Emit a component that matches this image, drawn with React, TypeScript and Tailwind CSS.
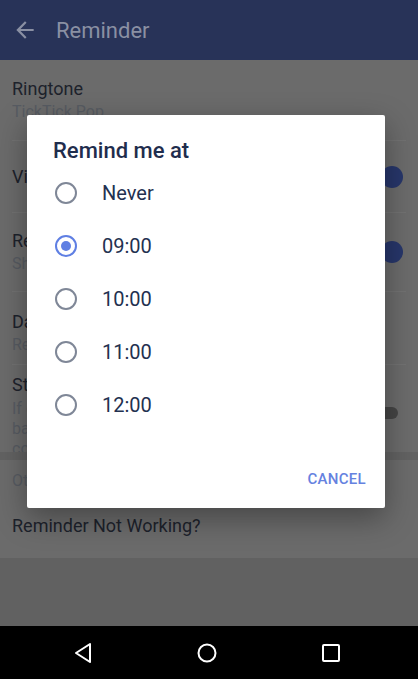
const times = ["Never", "09:00", "10:00", "11:00", "12:00", "13:00"];

const Radio = ({ checked }: { checked: boolean }) => (
  <span
    className={`flex h-[22px] w-[22px] items-center justify-center rounded-full border-2 ${
      checked ? "border-[#5f7fe3]" : "border-[#7f8797]"
    }`}
  >
    {checked && <span className="h-[10px] w-[10px] rounded-full bg-[#5f7fe3]" />}
  </span>
);

const Knob = () => (
  <div className="absolute right-[15px] top-1/2 h-[22px] w-[22px] -translate-y-1/2 rounded-full bg-[#27366a]" />
);

export default function App() {
  return (
    <div
      className="relative flex h-[679px] w-[418px] flex-col overflow-hidden bg-[#616161]"
      style={{ fontFamily: "Roboto, 'Liberation Sans', sans-serif" }}
    >
      {/* app bar, dimmed */}
      <header className="flex h-[60px] items-center bg-[#283358] pl-[12px]">
        <svg width="26" height="26" viewBox="0 0 24 24" className="text-[#8a90a3]">
          <path d="M20 11H7.83l5.59-5.59L12 4l-8 8 8 8 1.41-1.41L7.83 13H20v-2z" fill="currentColor" />
        </svg>
        <span className="ml-[18px] text-[22px] text-[#8a90a3]">Reminder</span>
      </header>

      {/* settings list, dimmed */}
      <div className="flex flex-col bg-[#6b6b6b]">
        <div className="flex h-[80px] flex-col px-[12px] pt-[18px]">
          <span className="text-[18px] leading-[22px] text-[#1d222b]">Ringtone</span>
          <span className="mt-[1px] text-[16px] leading-[22px] text-[#575b62]">TickTick Pop</span>
        </div>
        <div className="mx-[12px] h-px bg-[#727272]" />
        <div className="relative flex h-[71px] items-center px-[12px]">
          <span className="text-[18px] text-[#1d222b]">Vibrate</span>
          <Knob />
        </div>
        <div className="mx-[12px] h-px bg-[#727272]" />
        <div className="relative flex h-[78px] flex-col px-[12px] pt-[17px]">
          <span className="text-[18px] leading-[22px] text-[#1d222b]">Reminder popup</span>
          <span className="mt-[1px] text-[16px] leading-[22px] text-[#575b62]">Show task popup when reminding</span>
          <Knob />
        </div>
        <div className="mx-[12px] h-px bg-[#727272]" />
        <div className="flex h-[72px] flex-col px-[12px] pt-[19px]">
          <span className="text-[18px] leading-[22px] text-[#1d222b]">Daily Notification</span>
          <span className="mt-[1px] text-[16px] leading-[22px] text-[#575b62]">Remind me of today's tasks</span>
        </div>
        <div className="mx-[12px] h-px bg-[#727272]" />
        <div className="relative flex h-[87px] flex-col overflow-hidden px-[12px] pt-[9px]">
          <span className="text-[18px] leading-[22px] text-[#1d222b]">Strong reminder</span>
          <span className="mt-[3px] text-[16px] leading-[20px] text-[#575b62]">
            If enabled, the reminder
            <br />
            based on the alarm will be
            <br />
            continuous
          </span>
          <div className="absolute right-[20px] top-[42px] h-[12px] w-[30px] rounded-full bg-[#454545]" />
        </div>
      </div>

      <div className="h-[8px] bg-[#626262]" />

      <div className="flex flex-col bg-[#6b6b6b]">
        <div className="flex h-[42px] items-center px-[12px]">
          <span className="text-[16px] text-[#575b62]">Other</span>
        </div>
        <div className="flex h-[56px] items-center px-[12px] pb-[9px]">
          <span className="text-[18px] text-[#1d222b]">Reminder Not Working?</span>
        </div>
      </div>

      <div className="flex-1" />

      {/* navigation bar */}
      <nav className="flex h-[53px] items-center gap-[103px] bg-black pl-[73px]">
        <svg width="20" height="22" viewBox="0 0 20 22">
          <path d="M17 2 L3 11 L17 20 Z" fill="none" stroke="#fff" strokeWidth="2" strokeLinejoin="round" />
        </svg>
        <svg width="22" height="22" viewBox="0 0 22 22">
          <circle cx="11" cy="11" r="8.5" fill="none" stroke="#fff" strokeWidth="2" />
        </svg>
        <svg width="20" height="20" viewBox="0 0 20 20">
          <rect x="2" y="2" width="16" height="16" rx="1" fill="none" stroke="#fff" strokeWidth="2" />
        </svg>
      </nav>

      {/* dialog */}
      <div className="absolute left-[27px] top-[115px] flex h-[393px] w-[358px] flex-col rounded-[2px] bg-white shadow-[0_10px_30px_rgba(0,0,0,0.35)]">
        <h2 className="px-[26px] pt-[22px] text-[22px] font-medium leading-[28px] text-[#1f2d4d]">Remind me at</h2>
        <div className="mt-[1px] h-[281px] overflow-hidden">
          {times.map((t, i) => (
            <div key={t} className="flex h-[53px] items-center pl-[28px]">
              <Radio checked={i === 1} />
              <span className="ml-[25px] text-[20px] text-[#233150]">{t}</span>
            </div>
          ))}
        </div>
        <div className="flex flex-1 items-center justify-end pr-[19px] pt-[4px]">
          <span className="text-[15px] font-medium tracking-[0.3px] text-[#6582e0]">CANCEL</span>
        </div>
      </div>
    </div>
  );
}
